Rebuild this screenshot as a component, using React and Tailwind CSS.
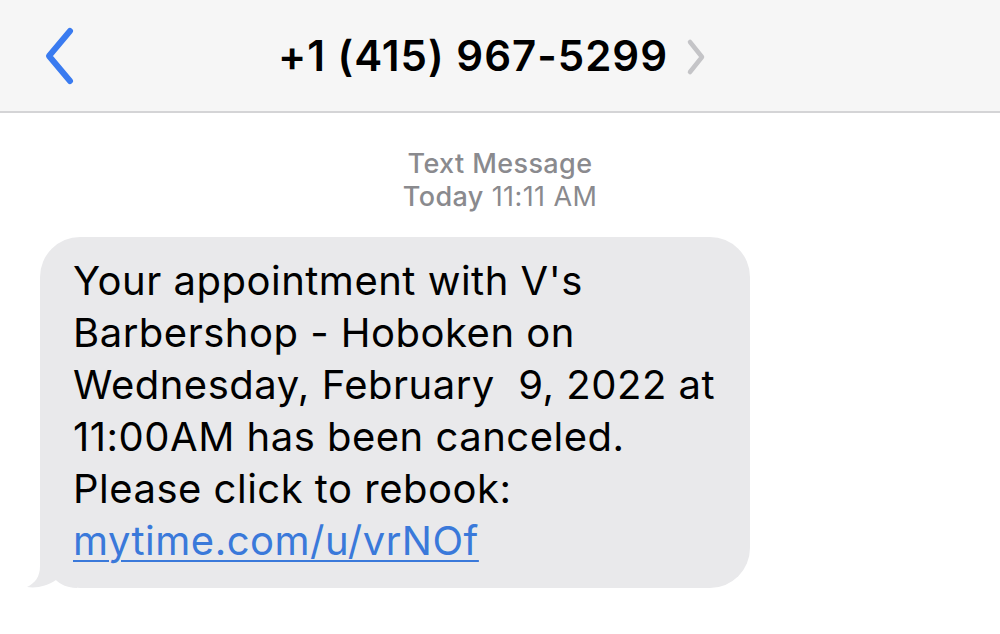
import React from 'react';

const font = { fontFamily: 'Inter, "Liberation Sans", sans-serif' };

const BackChevron = () => (
  <svg width="40" height="60" viewBox="0 0 40 60" fill="none">
    <path d="M32 5 L11 30 L32 55" stroke="#3a7bf0" strokeWidth="6" strokeLinecap="round" strokeLinejoin="round" />
  </svg>
);

const SmallChevron = () => (
  <svg width="24" height="38" viewBox="0 0 24 38" fill="none">
    <path d="M6 4 L18 19 L6 34" stroke="#c4c4c7" strokeWidth="4.5" strokeLinecap="round" strokeLinejoin="round" />
  </svg>
);

const App = () => {
  return (
    <div className="w-[1000px] h-[634px] bg-white overflow-hidden" style={font}>
      {/* header */}
      <div className="h-[113px] bg-[#f6f6f6] border-b-2 border-[#d4d4d6] flex items-center relative">
        <div className="absolute left-[38px] top-[26px]">
          <BackChevron />
        </div>
        <div className="w-full flex items-center justify-center">
          <span className="ml-[-14px] text-[42px] font-semibold text-black tracking-[1px]">
            +1 (415) 967-5299
          </span>
          <span className="ml-[16px] mt-[2px]">
            <SmallChevron />
          </span>
        </div>
      </div>

      {/* timestamp */}
      <div className="pt-[34px] text-center text-[#8a8a8e] text-[27px] leading-[33px] tracking-[0.4px]">
        <div className="font-medium">Text Message</div>
        <div><span className="font-medium">Today</span> 11:11 AM</div>
      </div>

      {/* bubble */}
      <div className="pl-[40px] pt-[24px]">
        <div className="relative w-[710px]">
          <div className="relative bg-[#e9e9eb] rounded-[40px] pl-[33px] pr-[20px] pt-[18px] pb-[21px] text-black text-[40px] leading-[52px] tracking-[0.5px]">
            <p>Your appointment with V's</p>
            <p>Barbershop - Hoboken on</p>
            <p>Wednesday, February&nbsp; 9, 2022 at</p>
            <p>11:00AM has been canceled.</p>
            <p>Please click to rebook:</p>
            <p className="relative z-10 text-[#3a79da] underline decoration-2 underline-offset-[5px]">mytime.com/u/vrNOf</p>
          </div>
          <svg className="absolute left-[-13px] bottom-0" width="50" height="40" viewBox="0 0 50 40">
            <path d="M13 0 L13 18 C13 29 8 35 0 39 C10 40.5 20 38 29 32 C34 37 40 39.5 50 40 L50 0 Z" fill="#e9e9eb" />
          </svg>
        </div>
      </div>
    </div>
  );
};

export default App;
